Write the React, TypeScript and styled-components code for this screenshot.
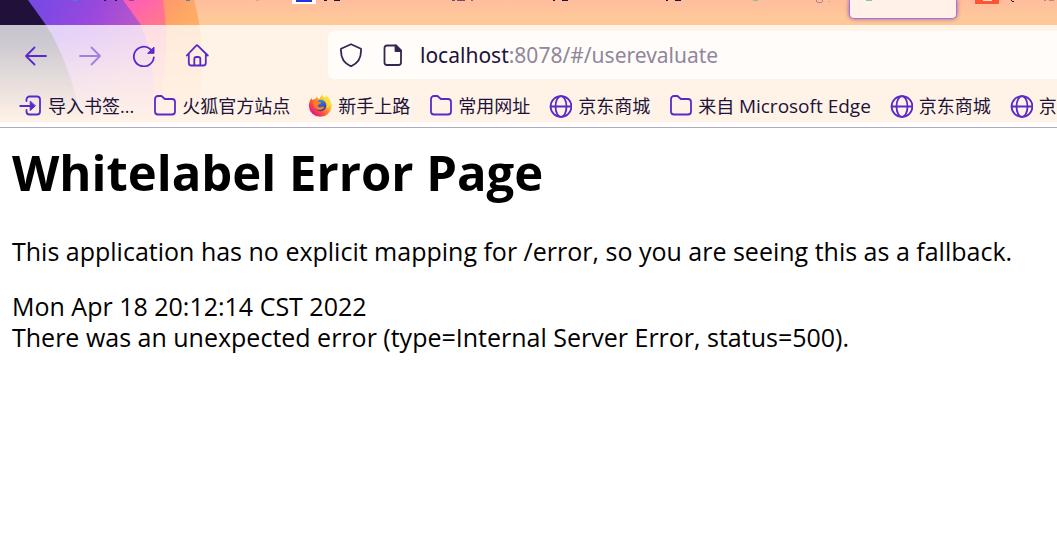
import React from "react";
import styled, { createGlobalStyle } from "styled-components";

const GlobalStyle = createGlobalStyle`
  * { box-sizing: border-box; }
  body {
    margin: 0;
    background: #ffffff;
    font-family: "Open Sans", "Noto Sans CJK SC", sans-serif;
  }
`;

const accent = "#592acb";
const ink = "#20123a";

const Chrome = styled.header`
  position: relative;
  overflow: hidden;
  background: #ffc999;
  border-bottom: 1px solid #b0aabf;
`;

const Artwork = styled.svg`
  position: absolute;
  top: 0;
  left: 0;
`;

const TabStrip = styled.div`
  position: relative;
  display: flex;
  gap: 5px;
  height: 25px;
  padding-left: 58px;
  overflow: hidden;
`;

const Tab = styled.button<{ $active?: boolean }>`
  display: flex;
  align-items: flex-start;
  flex: none;
  width: 108px;
  height: 19px;
  padding: 0;
  border: 1px solid ${(p) => (p.$active ? "#a66ff5" : "transparent")};
  border-top: 0;
  border-radius: 0 0 5px 5px;
  background: ${(p) => (p.$active ? "#fff0e8" : "transparent")};
  box-shadow: ${(p) => (p.$active ? "0 0 4px rgba(90, 40, 90, 0.6)" : "none")};

  svg {
    display: block;
  }
`;

const Toolbars = styled.div`
  position: relative;
  background: rgba(255, 255, 255, 0.76);
  border-bottom: 5px solid #fffefd;
`;

const NavBar = styled.nav`
  display: flex;
  align-items: center;
  height: 60px;
  padding-left: 24px;
`;

const NavButtons = styled.div`
  display: flex;
  flex: none;
  gap: 30px;
  width: 304px;
`;

const IconButton = styled.button`
  width: 24px;
  height: 24px;
  padding: 0;
  border: 0;
  background: none;
  color: ${accent};

  &:disabled {
    opacity: 0.5;
  }

  svg {
    display: block;
  }
`;

const AddressBar = styled.div`
  display: flex;
  flex: 1;
  align-items: center;
  min-width: 0;
  height: 48px;
  padding-left: 11px;
  border-radius: 6px 0 0 6px;
  background: #fffcf9;
`;

const AddressIcons = styled.div`
  display: flex;
  gap: 18px;
  width: 81px;
  color: #342650;
`;

const Address = styled.label`
  position: relative;
  flex: 1;
  font-family: "Noto Sans", sans-serif;
  font-size: 21px;
  line-height: 30px;
`;

const AddressInput = styled.input`
  display: block;
  width: 100%;
  height: 30px;
  padding: 0;
  border: 0;
  outline: 0;
  background: none;
  color: transparent;
  caret-color: ${ink};
  font: inherit;
`;

const AddressText = styled.span`
  position: absolute;
  inset: 0;
  color: #8f879c;
  white-space: nowrap;
  pointer-events: none;

  b {
    color: ${ink};
    font-weight: 400;
  }
`;

const BookmarkBar = styled.nav`
  display: flex;
  gap: 18px;
  height: 37px;
  padding: 8px 0 0 18px;
  overflow: hidden;
`;

const Bookmark = styled.a`
  display: flex;
  flex: none;
  align-items: center;
  gap: 6px;
  height: 26px;
  color: ${ink};
  font-size: 18px;
  line-height: 26px;
  text-decoration: none;
  white-space: nowrap;

  svg {
    flex: none;
    color: ${accent};
  }
`;

const Latin = styled.span`
  font-size: 19px;
`;

const Content = styled.main`
  padding: 11px 12px;
  color: #000;
  font-size: 25px;
  line-height: 31px;
`;

const Title = styled.h1`
  margin: 0 0 30px;
  font-size: 49px;
  line-height: 67px;
  font-weight: 700;
`;

const Message = styled.p`
  margin: 0 0 24px;
`;

type Mark = [number, number, number, number, string];

const tabs: { id: string; marks: Mark[] }[] = [
  { id: "one", marks: [[14, 0, 4, 1, "#2d93c8"], [45, 0, 2, 1, ink], [56, 0, 2, 1, ink], [70, 0, 5, 1, "#8b4a99"]] },
  { id: "two", marks: [[14, 0, 4, 1, "#2d93c8"], [84, 0, 3, 1, "#e8a58b"]] },
  { id: "three", marks: [[7, 0, 24, 4, "#ffffff"], [11, 0, 16, 2, "#2632e0"], [39, 0, 3, 1, ink], [49, 0, 6, 1, ink]] },
  { id: "four", marks: [[54, 0, 3, 1, "#6d5362"], [59, 0, 8, 1, "#6d5362"], [73, 0, 2, 1, "#8a6a70"]] },
  { id: "five", marks: [[42, 0, 2, 1, ink], [51, 0, 6, 1, ink]] },
  { id: "six", marks: [[42, 0, 2, 1, ink], [51, 0, 6, 1, ink]] },
  { id: "seven", marks: [[16, 0, 5, 1, "#7cc79d"], [79, 0, 1, 2, "#b28786"], [80, 2, 5, 1, "#b28786"], [85, 0, 1, 2, "#b28786"], [91, 1, 2, 1, "#dba694"]] },
  { id: "active", marks: [[16, 0, 6, 1, "#7ccba2"]] },
  { id: "nine", marks: [[12, 0, 24, 4, "#ff5630"], [20, 0, 9, 1, "#ffe1da"], [48, 0, 1, 1, ink], [49, 1, 2, 1, ink], [81, 0, 2, 1, "#b28786"], [86, 0, 5, 1, "#b28786"]] },
];

const stroke = {
  fill: "none",
  stroke: "currentColor",
  strokeWidth: 1.8,
  strokeLinecap: "round" as const,
  strokeLinejoin: "round" as const,
};

const Icon = ({ children }: { children: React.ReactNode }) => (
  <svg width="24" height="24" viewBox="0 0 24 24" aria-hidden="true" {...stroke}>
    {children}
  </svg>
);

const FolderIcon = () => (
  <Icon>
    <path d="M3 5a3 3 0 0 1 3-3h3.500L12.800 5h7.200a3 3 0 0 1 3 3v9.500a3 3 0 0 1-3 3H6a3 3 0 0 1-3-3z" />
  </Icon>
);

const GlobeIcon = () => (
  <Icon>
    <circle cx="13" cy="12.500" r="10.400" />
    <ellipse cx="13" cy="12.500" rx="5.500" ry="10.400" />
    <path d="M2.600 12.500h20.800" />
  </Icon>
);

const ImportIcon = () => (
  <Icon>
    <path d="M8.500 7V5.500a3 3 0 0 1 3-3H19a3 3 0 0 1 3 3v12a3 3 0 0 1-3 3h-7.500a3 3 0 0 1-3-3V16M2.200 12h10" />
    <path d="M12.200 7.500v9l5-4.500z" fill="currentColor" strokeWidth="1" />
  </Icon>
);

const FirefoxIcon = () => (
  <svg width="24" height="24" viewBox="-1 0 24 24" aria-hidden="true">
    <defs>
      <linearGradient id="fox" x1="0.9" y1="0.1" x2="0.15" y2="0.85">
        <stop offset="0" stopColor="#fff44f" />
        <stop offset="0.35" stopColor="#ffb52b" />
        <stop offset="0.65" stopColor="#ff5a36" />
        <stop offset="1" stopColor="#e31587" />
      </linearGradient>
      <linearGradient id="world" x1="0" y1="0" x2="0.4" y2="1">
        <stop offset="0" stopColor="#18a5f5" />
        <stop offset="1" stopColor="#3d32a8" />
      </linearGradient>
    </defs>
    <path d="M2.500 4 3.500 6q1-1 2.500-1L8 2.500q.5 2 2.500 2.500L13 .5q1 2.500 3 3L17.500 1q5.500 6 5 12A11.300 10.800 0 0 1 0 13Q-.500 8 2.500 4z" fill="url(#fox)" />
    <circle cx="11.500" cy="11.500" r="5.800" fill="url(#world)" />
    <path d="M4.500 7q2.500-1.500 4.500 .5l3 .5q.5 1.500-1.500 2L8.500 11.500q.5 2.500 3.500 1.500 2-1 3.500 0-1.500 3-5 3-5-.5-6-5z" fill="#ff7b24" />
    <path d="M13 1.500q1 3 4 5.500 2.500 3 .5 7l3.500-3q0-4-3-6-3-1.500-5-3.500z" fill="#ffdc3e" />
  </svg>
);

const bookmarks = [
  { label: "导入书签...", icon: <ImportIcon /> },
  { label: "火狐官方站点", icon: <FolderIcon /> },
  { label: "新手上路", icon: <FirefoxIcon /> },
  { label: "常用网址", icon: <FolderIcon /> },
  { label: "京东商城", icon: <GlobeIcon /> },
  { label: <span>来自 <Latin>Microsoft Edge</Latin></span>, icon: <FolderIcon /> },
  { label: "京东商城", icon: <GlobeIcon /> },
  { label: "京东商城", icon: <GlobeIcon /> },
];

const ThemeArtwork = () => (
  <Artwork width="100%" height="127" aria-hidden="true">
    <defs>
      <linearGradient id="sky" x1="0" y1="0" x2="0" y2="1">
        <stop offset="0" stopColor="#ffbd9e" />
        <stop offset="0.14" stopColor="#ffc899" />
        <stop offset="1" stopColor="#ffcb9b" />
      </linearGradient>
      <linearGradient id="violet" gradientUnits="userSpaceOnUse" x1="45" y1="0" x2="145" y2="55">
        <stop offset="0" stopColor="#7a49e4" />
        <stop offset="0.45" stopColor="#9b48dd" />
        <stop offset="1" stopColor="#c95fbd" />
      </linearGradient>
      <linearGradient id="rose" gradientUnits="userSpaceOnUse" x1="130" y1="0" x2="160" y2="35">
        <stop offset="0" stopColor="#ff5cb8" />
        <stop offset="1" stopColor="#ff7f83" />
      </linearGradient>
      <linearGradient id="amber" gradientUnits="userSpaceOnUse" x1="165" y1="0" x2="190" y2="25">
        <stop offset="0" stopColor="#ff966f" />
        <stop offset="0.6" stopColor="#ffa665" />
        <stop offset="1" stopColor="#ffad66" />
      </linearGradient>
      <linearGradient id="haze" x1="0" y1="0" x2="0" y2="1">
        <stop offset="0.1" stopColor="#ffc898" stopOpacity="0" />
        <stop offset="0.95" stopColor="#ffc898" stopOpacity="1" />
      </linearGradient>
    </defs>
    <rect width="100%" height="127" fill="url(#sky)" />
    <path d="M0 0h194Q209 50 196 127H0z" fill="url(#amber)" />
    <path d="M0 0h163Q173 60 153 127H0z" fill="url(#rose)" />
    <path d="M0 0h123L141 25Q160 70 150 127H0z" fill="url(#violet)" />
    <path d="M0 0h28L46 25Q70 62 83 127H0z" fill="#20113a" />
    <rect y="25" width="100%" height="102" fill="url(#haze)" />
  </Artwork>
);

export default function App() {
  return (
    <>
      <GlobalStyle />
      <Chrome>
        <ThemeArtwork />
        <TabStrip>
          {tabs.map((tab) => (
            <Tab key={tab.id} $active={tab.id === "active"} aria-label={`Tab ${tab.id}`}>
              <svg width="106" height="5" aria-hidden="true">
                {tab.marks.map(([x, y, w, h, fill], i) => (
                  <rect key={i} x={x} y={y} width={w} height={h} fill={fill} />
                ))}
              </svg>
            </Tab>
          ))}
        </TabStrip>
        <Toolbars>
          <NavBar>
            <NavButtons>
              <IconButton aria-label="Back">
                <Icon><path d="M22 13H2.500M10.500 4.500 2 13l8.500 8.500" /></Icon>
              </IconButton>
              <IconButton aria-label="Forward" disabled>
                <Icon><path d="M2 13h19.500M13.500 4.500 22 13l-8.500 8.500" /></Icon>
              </IconButton>
              <IconButton aria-label="Reload">
                <Icon>
                  <path d="M21.800 14.500a10 9.800 0 1 1-3.300-8.300" />
                  <path d="M22 4.500v5.800h-6z" fill="currentColor" strokeWidth="1" />
                </Icon>
              </IconButton>
              <IconButton aria-label="Home">
                <Icon>
                  <path d="M.800 12.500 10 2.800q1-1 2 0L21.800 12.500M2.800 10.500v9.500a2.500 2.500 0 0 0 2.500 2.500h12a2.500 2.500 0 0 0 2.500-2.500v-9.500M8.300 22.500v-6.500a2 2 0 0 1 2-2h2a2 2 0 0 1 2 2v6.500" />
                </Icon>
              </IconButton>
            </NavButtons>
            <AddressBar>
              <AddressIcons>
                <Icon><path d="M12 1.200 22 5.800C22.500 14 19 20.500 12 23.300 5 20.500 1.500 14 2 5.800z" /></Icon>
                <Icon>
                  <path d="M3.500 5a2.500 2.500 0 0 1 2.500-2.500h9l5 5V19.500a2.500 2.500 0 0 1-2.500 2.500H6a2.500 2.500 0 0 1-2.500-2.500z" />
                  <path d="M14.500 2.500v5.500h5.500z" fill="currentColor" />
                </Icon>
              </AddressIcons>
              <Address>
                <AddressInput aria-label="Address" />
                <AddressText>
                  <b>localhost</b>:8078/#/userevaluate
                </AddressText>
              </Address>
            </AddressBar>
          </NavBar>
          <BookmarkBar>
            {bookmarks.map((item, i) => (
              <Bookmark key={i} href="#">
                {item.icon}
                {item.label}
              </Bookmark>
            ))}
          </BookmarkBar>
        </Toolbars>
      </Chrome>
      <Content>
        <Title>Whitelabel Error Page</Title>
        <Message>This application has no explicit mapping for /error, so you are seeing this as a fallback.</Message>
        <div>Mon Apr 18 20:12:14 CST 2022</div>
        <div>There was an unexpected error (type=Internal Server Error, status=500).</div>
      </Content>
    </>
  );
}
